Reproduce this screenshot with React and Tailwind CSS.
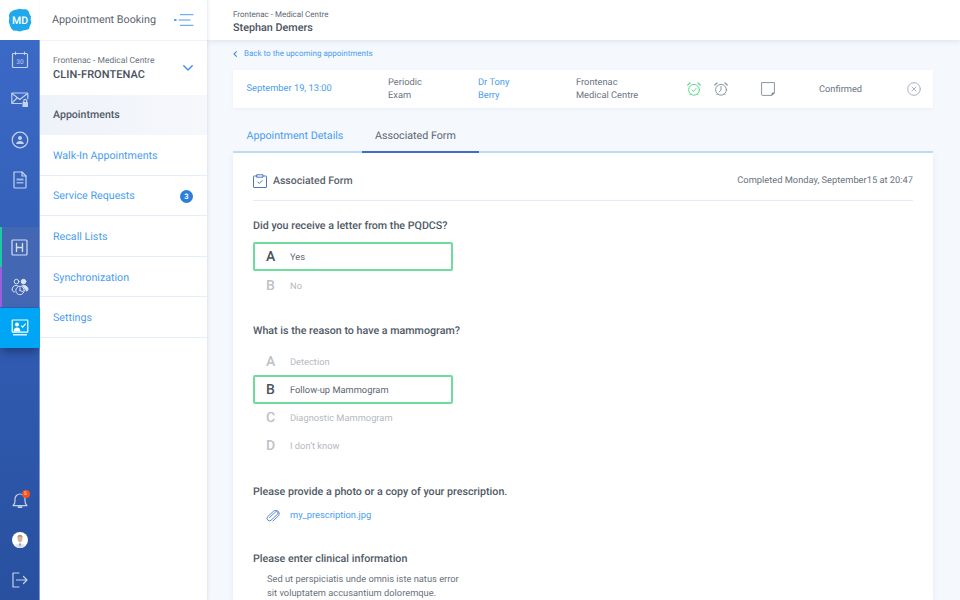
import React from "react";

const S = { fill: "none", stroke: "currentColor", strokeWidth: 1.2, strokeLinecap: "round", strokeLinejoin: "round" };

function Logo() {
  return (
    <svg width="24" height="24" viewBox="0 0 24 24">
      <path d="M6 2 L9 1.600 L11 .8 L14 1.300 L18 1.200 L20.500 3 L21.500 6 L23 8.500 L22.600 11.500 L23.300 15 L21.800 18 L21 21 L18 22 L15 22.600 L12 23.400 L8.500 22.700 L5 22.500 L3 20 L1.800 17 L.8 14 L1.300 10 L.9 7 L2.500 4 Z" fill="#1fa9ec" />
      <text x="12" y="15.800" textAnchor="middle" fontSize="10.500" fontWeight="500" fill="#fff" fontFamily="Roboto, sans-serif">MD</text>
    </svg>
  );
}
const Cal = () => (
  <svg width="18" height="18" viewBox="0 0 18 18" {...S}>
    <rect x="1.500" y="2.500" width="15" height="14" rx="1" />
    <path d="M4.500 1v2.500M13.500 1v2.500" />
    <text x="9" y="12.600" textAnchor="middle" fontSize="6.500" stroke="none" fill="currentColor" fontFamily="Roboto, sans-serif">30</text>
  </svg>
);
const MailLock = () => (
  <svg width="18" height="16" viewBox="0 0 18 16" {...S}>
    <path d="M10.500 11.500H1.500a.7.7 0 0 1-.7-.7V1.700A.7.7 0 0 1 1.500 1h14.600a.7.7 0 0 1 .7.7v5" />
    <path d="M1 1.500 8.800 7.500 16.500 1.500M1 11l5-5" />
    <rect x="11.500" y="10" width="5.500" height="5" rx=".5" fill="currentColor" stroke="none" />
    <path d="M12.800 10V8.800a1.400 1.400 0 0 1 2.900 0V10" />
  </svg>
);
const UserCircle = () => (
  <svg width="18" height="18" viewBox="0 0 18 18" {...S}>
    <circle cx="9" cy="9" r="7.800" />
    <circle cx="9" cy="7" r="2" fill="currentColor" stroke="none" />
    <path d="M5.200 13c0-2 1.600-3 3.800-3s3.800 1 3.800 3z" fill="currentColor" stroke="none" />
  </svg>
);
const Doc = () => (
  <svg width="16" height="18" viewBox="0 0 16 18" {...S}>
    <path d="M2 1h8l4 4v11.200a.8.8 0 0 1-.8.8H2.800a.8.8 0 0 1-.8-.8z" />
    <path d="M10 1v4h4" />
    <path d="M4.500 7.500h7v2h-7zM4.500 11h7v1.500h-7z" fill="currentColor" stroke="none" opacity=".75" />
  </svg>
);
const HIcon = () => (
  <svg width="17" height="17" viewBox="0 0 17 17" {...S} stroke="#d3def2">
    <rect x="1" y="1" width="15" height="15" rx="1" />
    <path d="M5.500 4.500v8M11.500 4.500v8M5.500 8.500h6" strokeWidth="1.400" />
  </svg>
);
const People = () => (
  <svg width="18" height="18" viewBox="0 0 18 18" fill="none" stroke="#dbe5f6" strokeWidth="1" strokeLinecap="round" strokeLinejoin="round">
    <circle cx="5.500" cy="3.600" r="2.300" />
    <circle cx="12.500" cy="3.600" r="2.300" fill="#dbe5f6" />
    <path d="M1.200 12c-.3-3 1.500-4.500 3.800-4.500 1 0 1.700.2 2.300.6M3.400 14c-1 0-2-.6-2.200-2" />
    <path d="M11 7.700c3-.7 6 .5 6 3.600 0 1.200-.6 1.700-1.700 1.700" fill="#dbe5f6" />
    <circle cx="9" cy="12.500" r="4.200" fill="#4467b4" />
    <path d="M9 12.500V9.800M9 12.500l2.500 1" />
  </svg>
);
const Screen = () => (
  <svg width="18" height="18" viewBox="0 0 18 18">
    <rect x="1.200" y="1" width="15.600" height="12.200" rx=".6" fill="none" stroke="#fff" strokeWidth="1.200" />
    <circle cx="6" cy="5.400" r="2" fill="#fff" />
    <path d="M2.600 12.400c0-2.600 1.500-3.900 3.400-3.900s3.400 1.300 3.400 3.900z" fill="#fff" />
    <path d="M10.200 6.600l1.500 1.500 3-3.400" fill="none" stroke="#fff" strokeWidth="1.100" />
    <path d="M2 15.800h14" stroke="#fff" strokeWidth="1.300" />
  </svg>
);
const Bell = () => (
  <svg width="16" height="17" viewBox="0 0 16 17" {...S}>
    <path d="M1 13.600c1.500-1.200 2-2.400 2-4.600V7a5 5 0 0 1 10 0v2c0 2.200.5 3.400 2 4.600z" />
    <path d="M6.500 15.200h3" strokeWidth="1.800" />
  </svg>
);
const Exit = () => (
  <svg width="16" height="16" viewBox="0 0 16 16" {...S}>
    <path d="M7 1H1v14h6M4.500 8H15M11.500 4.500 15 8l-3.500 3.500" />
  </svg>
);
const Avatar = () => (
  <svg width="16" height="16" viewBox="0 0 16 16">
    <clipPath id="av"><circle cx="8" cy="8" r="8" /></clipPath>
    <g clipPath="url(#av)">
      <rect width="16" height="16" fill="#fff" />
      <path d="M2.500 16c0-3 2.200-4.300 5.500-4.300s5.500 1.300 5.500 4.300z" fill="#dfe5ee" />
      <path d="M7 11.500h2l-1 3.500z" fill="#7a8fb0" />
      <ellipse cx="8" cy="6.800" rx="2.400" ry="3.400" fill="#dcb196" />
      <path d="M5.400 6.200C5.200 3.400 6.500 2.800 8 2.800s2.800.6 2.600 3.400C10 4.800 9 4.600 8 4.600S6 4.800 5.400 6.200z" fill="#9d948c" />
    </g>
  </svg>
);
const Menu = () => (
  <svg width="20" height="12" viewBox="0 0 20 12" fill="none" stroke="#4a9df0" strokeWidth="1">
    <path d="M1 6h.6" strokeWidth="2.200" strokeLinecap="round" />
    <path d="M6 .7h13.500M4.500 6h12M6 11.300h13.500" />
  </svg>
);
const Chevron = () => (
  <svg width="10" height="6" viewBox="0 0 10 6" fill="none" stroke="#3f8fe6" strokeWidth="1.400" strokeLinecap="round" strokeLinejoin="round" className="block">
    <path d="M.8.8 5 5 9.200.8" />
  </svg>
);
const Alarm = ({ check }) => (
  <svg width="14" height="14" viewBox="0 0 14 14" fill="none" stroke="currentColor" strokeWidth="1" strokeLinecap="round" strokeLinejoin="round">
    <circle cx="7" cy="7.800" r="5.400" />
    <path d="M.8 3 3 1M13.200 3 11 1" strokeWidth="1.300" />
    <path d="M2.800 12.800l1-1M11.200 12.800l-1-1" />
    {check ? <path d="M5 8l1.500 1.500L9 6.500" /> : <path d="M7 4.500v3.500l-1.800 2" />}
  </svg>
);
const Note = () => (
  <svg width="14" height="14" viewBox="0 0 14 14" fill="none" stroke="#8a94a1" strokeWidth="1" strokeLinejoin="round">
    <path d="M.6.600h12.800v10.400l-2.400 2.400H1.400a.8.8 0 0 1-.8-.8z" />
    <path d="M11 13.200V11h2.200z" fill="#5d6875" />
  </svg>
);
const CloseC = () => (
  <svg width="14" height="14" viewBox="0 0 14 14" fill="none" stroke="#a9b1bc" strokeWidth="1" strokeLinecap="round">
    <circle cx="7" cy="7" r="6.300" />
    <path d="M5 5l4 4M9 5l-4 4" />
  </svg>
);
const Clip = () => (
  <svg width="14" height="12" viewBox="0 0 14 12" fill="none" stroke="#4d7cc9" strokeWidth=".9" strokeLinecap="round" strokeLinejoin="round">
    <path d="M3.500 7.500 9.500 2a1.500 1.500 0 0 1 2.200 2.100L5 10.300a2.500 2.500 0 0 1-3.500-3.500L7.800 1a3.400 3.400 0 0 1 4.800 4.700L7 11" />
  </svg>
);
const Clipboard = () => (
  <svg width="14" height="14" viewBox="0 0 14 14" fill="none" stroke="#4d78bf" strokeWidth="1" strokeLinecap="round" strokeLinejoin="round">
    <path d="M4 2H1a.5.5 0 0 0-.5.5v10.500a.5.5 0 0 0 .5.500h12a.5.5 0 0 0 .5-.5V2.500A.5.5 0 0 0 13 2h-3" />
    <path d="M4 .8h6v2.400H4z" />
    <path d="M4.800 8l1.500 1.500L9.200 6.500" />
  </svg>
);

function RailItem({ children, className = "" }) {
  return <div className={`h-10 flex items-center justify-center ${className}`}>{children}</div>;
}

function Rail() {
  return (
    <div className="w-10 shrink-0 flex flex-col h-full">
      <div className="h-10 bg-white flex items-center justify-center shrink-0">
        <Logo />
      </div>
      <div className="flex-1 flex flex-col bg-gradient-to-b from-[#3b69c6] to-[#28509f] text-[#c3d2ec] border-r border-[#7f9ad3]">
        <RailItem><Cal /></RailItem>
        <RailItem><MailLock /></RailItem>
        <RailItem><UserCircle /></RailItem>
        <RailItem><Doc /></RailItem>
        <div className="h-[27px]" />
        <RailItem className="bg-[#4467b4] border-l-2 border-[#1dc9a0] pr-0.5"><HIcon /></RailItem>
        <RailItem className="bg-[#4467b4] border-l-2 border-[#9a5fe0] pr-0.5"><People /></RailItem>
        <RailItem className="bg-[#00a6f5] -mr-px shadow-[0_6px_8px_-2px_rgba(20,35,80,0.55)] mt-px"><Screen /></RailItem>
        <div className="flex-1" />
        <RailItem>
          <div className="relative flex">
            <Bell />
            <span className="absolute -top-[2px] right-[-2px] w-2 h-2 rounded-full bg-[#f4511e] text-white text-[5px] leading-2 text-center">5</span>
          </div>
        </RailItem>
        <RailItem><Avatar /></RailItem>
        <RailItem><Exit /></RailItem>
      </div>
    </div>
  );
}

function NavRow({ label, badge }) {
  return (
    <div className="h-[40.6px] flex items-center justify-between pl-[13px] pr-[14px] pt-[2px] border-b border-[#e6eefa] text-[#4a9df0] text-[10.700px]">
      <span>{label}</span>
      {badge && (
        <span className="w-[13px] h-[13px] rounded-full bg-[#2b7fd8] text-white text-[7.500px] font-bold flex items-center justify-center">{badge}</span>
      )}
    </div>
  );
}

function Side() {
  return (
    <div className="w-[167px] shrink-0 bg-white flex flex-col h-full shadow-[1px_0_3px_rgba(90,120,180,0.18)] z-10">
      <div className="h-10 flex items-center justify-between pl-[12px] pr-[13px] shrink-0">
        <span className="text-[#5c6570] text-[10.800px]">Appointment Booking</span>
        <Menu />
      </div>
      <div className="h-[55px] flex items-center justify-between pl-[13px] pr-[14px] shrink-0 border-t border-[#eef3fb]">
        <div className="flex flex-col">
          <span className="text-[8.500px] text-[#6c7580] leading-[12px]">Frontenac - Medical Centre</span>
          <span className="text-[11px] font-medium text-[#47505b] leading-[15px] tracking-[0.05px]">CLIN-FRONTENAC</span>
        </div>
        <Chevron />
      </div>
      <div className="h-10 flex items-center pl-[13px] bg-gradient-to-r from-[#eef2f9] to-[#f6f8fc] text-[#505a66] text-[10.600px] font-medium shrink-0">Appointments</div>
      <NavRow label="Walk-In Appointments" />
      <NavRow label="Service Requests" badge="3" />
      <NavRow label="Recall Lists" />
      <NavRow label="Synchronization" />
      <NavRow label="Settings" />
    </div>
  );
}

function InfoCell({ className = "", children }) {
  return <div className={`text-[9.300px] leading-[13.500px] ${className}`}>{children}</div>;
}

function Choice({ letter, label, selected }) {
  if (selected) {
    return (
      <div className="h-[29px] w-[200px] flex items-center pt-[2px] border-2 border-[#6fdc9c] rounded-[2px] pl-[11px]">
        <span className="w-[24px] text-[14px] font-medium text-[#4b5560]">{letter}</span>
        <span className="text-[9.300px] text-[#5c6570]">{label}</span>
      </div>
    );
  }
  return (
    <div className="h-[28px] flex items-center pt-[3px] pl-[13px]">
      <span className="w-[24px] text-[14px] font-medium text-[#bcc2c9]">{letter}</span>
      <span className="text-[9.300px] text-[#b4b9c0]">{label}</span>
    </div>
  );
}

function Question({ children, className = "" }) {
  return <div className={`text-[10.700px] font-medium text-[#505a66] leading-[14px] ${className}`}>{children}</div>;
}

function Main() {
  return (
    <div className="flex-1 min-w-0 h-full flex flex-col bg-[#f5f8fd]">
      <div className="h-10 shrink-0 bg-white pl-[26px] pt-[3px] flex flex-col justify-center shadow-[0_1px_6px_rgba(90,120,180,0.18)] z-[5]">
        <span className="text-[8px] text-[#5f6873] leading-[11px]">Frontenac - Medical Centre</span>
        <span className="text-[10.800px] font-medium text-[#4a535e] leading-[15px]">Stephan Demers</span>
      </div>
      <div className="flex-1 min-h-0 pl-[26px] pr-[27px] flex flex-col">
        <div className="h-[30px] shrink-0 pb-[2px] flex items-center gap-[7px] text-[#4a9df0] text-[8px]">
          <svg width="4" height="6" viewBox="0 0 4 6" fill="none" stroke="#3f8fe6" strokeWidth="1.100" strokeLinecap="round"><path d="M3.400.6 1 3l2.400 2.400" /></svg>
          <span>Back to the upcoming appointments</span>
        </div>
        <div className="h-[38px] shrink-0 bg-white flex items-center shadow-[0_1px_3px_rgba(90,120,180,0.08)] text-[#6b747f]">
          <InfoCell className="w-[155px] pl-[13.500px] text-[#4a9df0]">September 19, 13:00</InfoCell>
          <InfoCell className="w-[90px]">Periodic<br />Exam</InfoCell>
          <InfoCell className="w-[98px] text-[#4a9df0]">Dr Tony<br />Berry</InfoCell>
          <InfoCell className="w-[111px]">Frontenac<br />Medical Centre</InfoCell>
          <span className="text-[#5fdc8f] flex"><Alarm check /></span>
          <span className="text-[#8e98a5] flex ml-[13px]"><Alarm /></span>
          <span className="flex ml-[33px]"><Note /></span>
          <InfoCell className="ml-[44px] w-[88px] pt-px">Confirmed</InfoCell>
          <CloseC />
        </div>
        <div className="h-[45px] shrink-0 flex items-end border-b-2 border-[#c5dcf5] text-[10.700px]">
          <div className="w-[129px] h-[37px] -mb-[2px] pl-[13.500px] pt-[6px] flex items-center text-[#4a9df0] border-b-2 border-transparent">Appointment Details</div>
          <div className="w-[117px] h-[37px] -mb-[2px] pl-[13px] pt-[6px] flex items-center text-[#5c6570] border-b-2 border-[#3f6fc8]">Associated Form</div>
        </div>
        <div className="flex-1 min-h-0 overflow-hidden bg-white px-[20px] shadow-[0_1px_6px_rgba(90,120,180,0.1)]">
          <div className="h-[48px] pt-[8px] flex items-center justify-between border-b border-[#e4ecfa]">
            <div className="flex items-center gap-[6px]">
              <Clipboard />
              <span className="text-[10.500px] font-medium text-[#5a636e]">Associated Form</span>
            </div>
            <span className="text-[9.300px] text-[#69727d]">Completed Monday, September15 at 20:47</span>
          </div>
          <Question className="mt-[18px] mb-[9px]">Did you receive a letter from the PQDCS?</Question>
          <Choice letter="A" label="Yes" selected />
          <Choice letter="B" label="No" />
          <Question className="mt-[25px] mb-[9px]">What is the reason to have a mammogram?</Question>
          <Choice letter="A" label="Detection" />
          <Choice letter="B" label="Follow-up Mammogram" selected />
          <div className="-mt-px" />
          <Choice letter="C" label="Diagnostic Mammogram" />
          <Choice letter="D" label="I don’t know" />
          <Question className="mt-[26px]">Please provide a photo or a copy of your prescription.</Question>
          <div className="mt-[10px] pl-[13px] flex items-center gap-[10px] text-[9.300px] text-[#4a9df0] leading-[14px]">
            <Clip />
            <span>my_prescription.jpg</span>
          </div>
          <Question className="mt-[29px]">Please enter clinical information</Question>
          <div className="mt-[7px] pl-[14px] text-[9.300px] text-[#69727d] leading-[13.500px]">
            Sed ut perspiciatis unde omnis iste natus error<br />sit voluptatem accusantium doloremque.
          </div>
        </div>
      </div>
    </div>
  );
}

export default function App() {
  return (
    <div className="w-[960px] h-[600px] overflow-hidden flex font-['Roboto',sans-serif] bg-white [text-rendering:geometricPrecision]">
      <Rail />
      <Side />
      <Main />
    </div>
  );
}
